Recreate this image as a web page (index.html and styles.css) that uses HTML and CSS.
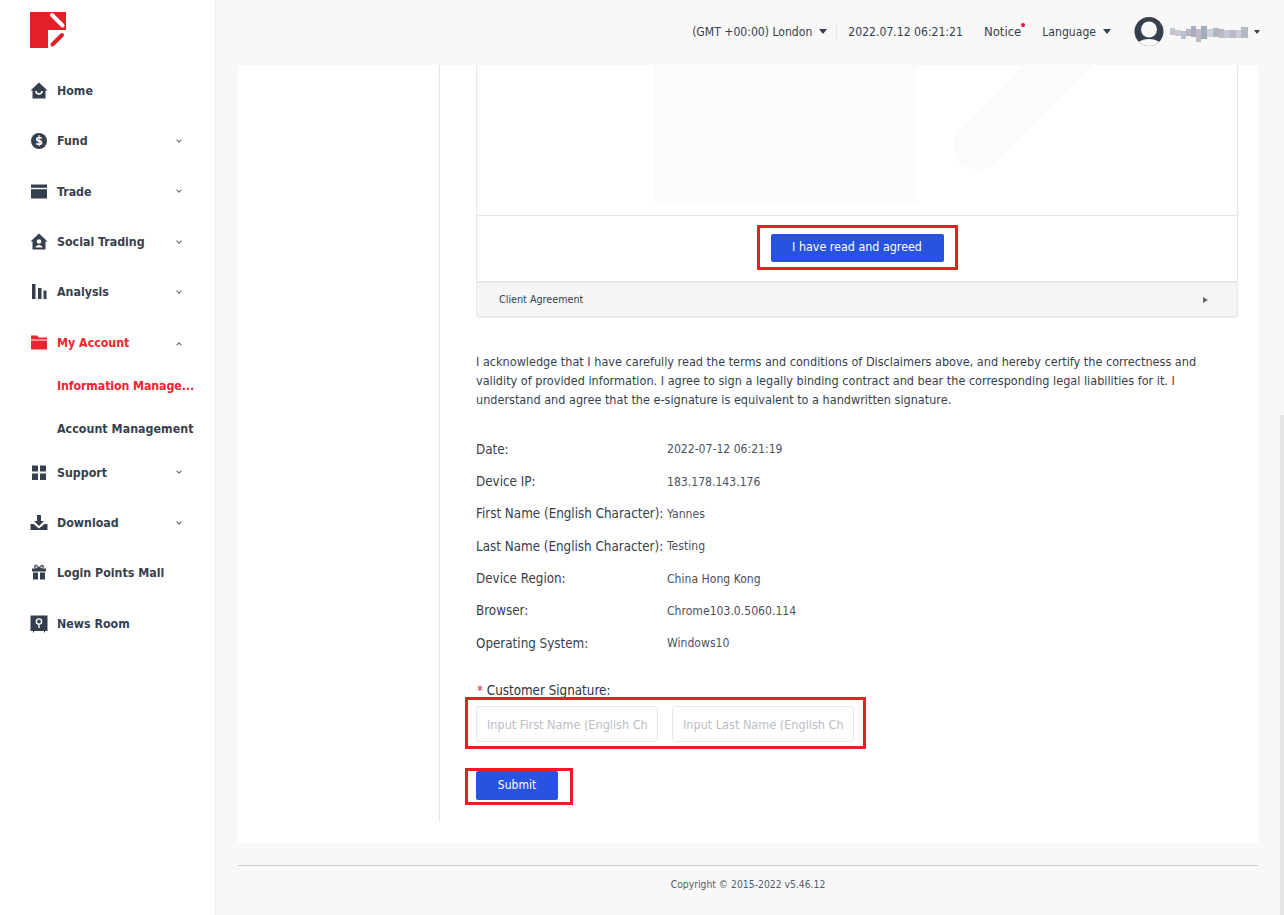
FILE: index.html
```html
<!DOCTYPE html>
<html lang="en">
<head>
<meta charset="utf-8">
<title>Information Management</title>
<link rel="stylesheet" href="styles.css">
</head>
<body>
<div class="app">
  <aside class="sidebar">
    <div class="logo">
      <svg width="36" height="36" viewBox="0 0 36 36"><path d="M0 0H36V18H18V36H0Z" fill="#e1202a"/><path d="M22 3L32.5 13.5" stroke="#fff" stroke-width="4" stroke-linecap="round" fill="none"/><path d="M22.5 32.5L32 23" stroke="#e1202a" stroke-width="4" stroke-linecap="round" fill="none"/></svg>
    </div>
    <nav class="menu">
      <a class="item"><svg class="ico" viewBox="0 0 18 18"><path d="M9 0.5L17.5 8.5H15.5V16.5H2.5V8.5H0.5Z" fill="#363f4d"/><path d="M6 9a3 3 0 0 0 6 0" stroke="#fff" stroke-width="1.6" fill="none"/></svg><span class="label">Home</span></a>
      <a class="item"><svg class="ico" viewBox="0 0 18 18"><circle cx="9" cy="9" r="8" fill="#363f4d"/><text x="9" y="13" text-anchor="middle" class="dollar">$</text></svg><span class="label">Fund</span><i class="chev"></i></a>
      <a class="item"><svg class="ico" viewBox="0 0 18 18"><path d="M1 1.5H17V15.5H1Z" fill="#363f4d"/><path d="M1 5.5H17" stroke="#fff" stroke-width="1.4"/></svg><span class="label">Trade</span><i class="chev"></i></a>
      <a class="item"><svg class="ico" viewBox="0 0 18 18"><path d="M9 0.5L17.5 8.5H15.5V16.5H2.5V8.5H0.5Z" fill="#363f4d"/><circle cx="9" cy="8.5" r="2.3" fill="#fff"/><path d="M5.5 14.5c0-3.4 7-3.4 7 0Z" fill="#fff"/></svg><span class="label">Social Trading</span><i class="chev"></i></a>
      <a class="item"><svg class="ico" viewBox="0 0 18 18"><path d="M2 1H5.5V16H2ZM8 5H11.500V16H8ZM13.500 7.500H16.500V16H13.500Z" fill="#363f4d"/></svg><span class="label">Analysis</span><i class="chev"></i></a>
      <a class="item active"><svg class="ico" viewBox="0 0 18 18"><path d="M1 1.500H7L9 3.500H17V15.500H1Z" fill="#f0242f"/><path d="M1 6H17" stroke="#fff" stroke-width="1"/></svg><span class="label">My Account</span><i class="chev up"></i></a>
      <div class="sub">
        <a class="sub-item active">Information Manage...</a>
        <a class="sub-item">Account Management</a>
      </div>
      <a class="item"><svg class="ico" viewBox="0 0 18 18"><path d="M2 1.500H8V7.500H2ZM10 1.500H16V7.500H10ZM2 9.500H8V16H2ZM10 9.500H16V16H10Z" fill="#363f4d"/></svg><span class="label">Support</span><i class="chev"></i></a>
      <a class="item"><svg class="ico" viewBox="0 0 18 18"><path d="M7 1H11V7H14L9 12L4 7H7Z" fill="#363f4d"/><path d="M0.500 10H3.500L9 14.500L14.500 10H17.500V16H0.500Z" fill="#363f4d"/></svg><span class="label">Download</span><i class="chev"></i></a>
      <a class="item gift"><svg class="ico" viewBox="0 0 18 18"><path d="M2 4.500H16V7.500H2ZM3 8.500H8V15.500H3ZM10 8.500H15V15.500H10Z" fill="#363f4d"/><path d="M9 4.500C7 0.500 4 0.500 5 4ZM9 4.500C11 0.500 14 0.500 13 4Z" stroke="#363f4d" stroke-width="1.200" fill="none"/></svg><span class="label">Login Points Mall</span></a>
      <a class="item"><svg class="ico" viewBox="0 0 18 18"><path d="M0.500 0.500H17.500V16H15V17.500H14V16H4V17.500H3V16H0.500Z" fill="#363f4d"/><circle cx="9" cy="6.500" r="2.600" fill="none" stroke="#fff" stroke-width="1.400"/><path d="M9 9V13" stroke="#fff" stroke-width="1.400"/></svg><span class="label">News Room</span></a>
    </nav>
  </aside>
  <div class="main">
    <header class="topbar">
      <span class="tz">(GMT +00:00) London<i class="caret"></i></span>
      <span class="clock">2022.07.12 06:21:21</span>
      <span class="notice">Notice<i class="dot"></i></span>
      <span class="lang">Language<i class="caret"></i></span>
      <span class="user">
        <svg class="avatar" viewBox="0 0 30 30"><defs><clipPath id="av"><circle cx="15" cy="14.500" r="14.500"/></clipPath></defs><circle cx="15" cy="14.500" r="14.500" fill="#363f4d"/><g clip-path="url(#av)"><circle cx="15" cy="12.500" r="8" fill="#f8f8f8"/><ellipse cx="15" cy="30" rx="13" ry="8" fill="#f8f8f8"/></g></svg>
        <svg class="mosaic" width="81" height="18" viewBox="0 0 81 18"><rect x="0" y="4" width="5" height="7" fill="#c0c6d0"/><rect x="5" y="6" width="6" height="6" fill="#ccc8d0"/><rect x="11" y="7" width="5" height="8" fill="#b8c2d0"/><rect x="16" y="5" width="5" height="7" fill="#bcb4bc"/><rect x="21" y="2" width="5" height="11" fill="#a8aebc"/><rect x="26" y="5" width="5" height="13" fill="#c0b8c6"/><rect x="31" y="2" width="6" height="13" fill="#a2aebe"/><rect x="37" y="5" width="6" height="8" fill="#ccd0d8"/><rect x="43" y="4" width="6" height="9" fill="#b2b6c0"/><rect x="49" y="5" width="5" height="9" fill="#bcb8c2"/><rect x="54" y="6" width="6" height="8" fill="#c4c8d2"/><rect x="60" y="6" width="6" height="8" fill="#bcbac6"/><rect x="66" y="6" width="5" height="8" fill="#ccccd6"/><rect x="71" y="3" width="7" height="11" fill="#b4b8c2"/></svg><i class="caret small"></i>
      </span>
    </header>
    <main class="content">
      <section class="panel">
        <div class="rail">
          <div class="card">
            <div class="doc">
              <div class="wm-page"></div>
              <svg class="wm-stroke" width="760" height="150" viewBox="0 0 760 150"><path d="M501 80L640 -59" stroke="#fbfbfb" stroke-width="50" stroke-linecap="round" fill="none"/></svg>
            </div>
            <div class="agree"><button class="btn btn-wide">I have read and agreed</button><span class="mark mark-agree"></span></div>
            <div class="collapse"><span>Client Agreement</span><i class="tri"></i></div>
          </div>
          <p class="ack">I acknowledge that I have carefully read the terms and conditions of Disclaimers above, and hereby certify the correctness and validity of provided information. I agree to sign a legally binding contract and bear the corresponding legal liabilities for it. I understand and agree that the e-signature is equivalent to a handwritten signature.</p>
          <dl class="facts">
            <div class="fact"><dt>Date:</dt><dd>2022-07-12 06:21:19</dd></div>
            <div class="fact"><dt>Device IP:</dt><dd>183.178.143.176</dd></div>
            <div class="fact"><dt>First Name (English Character):</dt><dd>Yannes</dd></div>
            <div class="fact"><dt>Last Name (English Character):</dt><dd>Testing</dd></div>
            <div class="fact"><dt>Device Region:</dt><dd>China Hong Kong</dd></div>
            <div class="fact"><dt>Browser:</dt><dd>Chrome103.0.5060.114</dd></div>
            <div class="fact"><dt>Operating System:</dt><dd>Windows10</dd></div>
          </dl>
          <div class="sig-label"><span class="req">*</span> Customer Signature:</div>
          <div class="sig-row">
            <input class="field" placeholder="Input First Name (English Character)">
            <input class="field" placeholder="Input Last Name (English Character)">
            <span class="mark mark-sig"></span>
          </div>
          <div class="submit-row"><button class="btn btn-submit">Submit</button><span class="mark mark-submit"></span></div>
        </div>
      </section>
      <footer class="footer">Copyright © 2015-2022 v5.46.12</footer>
    </main>
  </div>
</div>
<div class="thumb"></div>
</body>
</html>
```
FILE: styles.css
```css
* { box-sizing: border-box; }
html, body { margin: 0; height: 915px; overflow: hidden; }
body { font-family: "DejaVu Sans", "Liberation Sans", sans-serif; font-stretch: condensed; font-size: 12px; color: #363f4d; background: #f8f8f8; }
.app { display: flex; height: 915px; }

.sidebar { width: 216px; flex: none; background: #fff; border-right: 1px solid #eeeeee; }
.logo { height: 65px; padding: 12px 0 0 30px; }
.logo svg { display: block; }
.menu { display: flex; flex-direction: column; padding-top: 0.6px; }
.item { height: 50.4px; display: flex; align-items: center; padding-left: 30px; font-size: 12.3px; font-weight: 700; position: relative; }
.ico { width: 18px; height: 18px; margin-right: 9px; flex: none; }
.dollar { font-size: 12px; font-weight: 700; fill: #fff; }
.label { white-space: nowrap; }
.item.active, .sub-item.active { color: #f0242f; }
.chev { position: absolute; left: 176.5px; top: 22px; width: 4px; height: 4px; border-right: 1px solid #666; border-bottom: 1px solid #666; transform: rotate(45deg); }
.chev.up { transform: rotate(225deg); top: 25px; }
.sub { display: flex; flex-direction: column; gap: 7px; margin-bottom: 0.4px; }
.sub-item { height: 36px; line-height: 36px; padding-left: 57px; font-size: 12.3px; font-weight: 700; white-space: nowrap; letter-spacing: 0.05px; }
.sub-item.active { letter-spacing: -0.1px; }

.main { flex: 1; min-width: 0; display: flex; flex-direction: column; }
.topbar { height: 65px; flex: none; display: flex; align-items: center; padding: 0 24px 2px 0; justify-content: flex-end; background: #f8f8f8; font-size: 12.1px; }
.tz { display: flex; align-items: center; padding-right: 9px; border-right: 1px solid #e6e6e6; height: 18px; }
.caret { display: inline-block; width: 0; height: 0; border: 4px solid transparent; border-top: 5px solid #363f4d; border-bottom: 0; margin-left: 7px; }
.caret.small { border-width: 3.5px; border-top-width: 4px; border-bottom: 0; margin-left: 3px; }
.clock { margin-left: 11px; }
.notice { margin-left: 21px; position: relative; font-size: 13px; }
.dot { position: absolute; right: -4px; top: -1px; width: 4px; height: 4px; border-radius: 50%; background: #f0142f; }
.lang { margin-left: 21px; display: flex; align-items: center; }
.user { margin-left: 23px; display: flex; align-items: center; }
.avatar { width: 30px; height: 30px; margin-right: 6px; }
.mosaic { display: block; filter: blur(.7px); margin-top: 3px; }

.content { flex: 1; min-height: 0; padding: 0 26px 0 22px; display: flex; flex-direction: column; }
.panel { background: #fff; height: 778px; flex: none; padding-left: 201px; }
.rail { height: 757px; border-left: 1px solid #e4e4e4; padding-left: 36px; }

.card { width: 762px; border: 1px solid #e8e8e8; border-top: 0; border-radius: 0 0 4px 4px; }
.doc { height: 151px; border-bottom: 1px solid #e6e6e6; position: relative; overflow: hidden; }
.wm-page { position: absolute; left: 177px; top: 0; width: 262px; height: 138px; background: #fbfbfb; }
.wm-stroke { position: absolute; left: 0; top: 0; }
.agree { height: 65px; padding-bottom: 2px; display: flex; align-items: center; justify-content: center; position: relative; }
.btn { background: #2753e0; color: #fff; border: 0; border-radius: 2px; font: inherit; font-stretch: condensed; padding: 0 0 2px; }
.btn-wide { width: 173px; height: 28px; font-size: 12.4px; }
.collapse { height: 36px; background: #f5f5f5; border-top: 2px solid #e8e8e8; border-bottom: 1px solid #e8e8e8; border-radius: 0 0 4px 4px; display: flex; align-items: center; justify-content: space-between; padding: 0 29px 0 22px; font-size: 10.7px; }
.tri { width: 0; height: 0; border: 3.5px solid transparent; border-left: 5px solid #666; border-right: 0; }

.ack { margin: 34px 0 0; width: 730px; line-height: 19px; font-size: 12.55px; }
.facts { margin: 24px 0 0; }
.fact { height: 32.35px; display: flex; align-items: center; margin: 0; }
dt { width: 191px; flex: none; white-space: nowrap; font-size: 13.3px; }
dd { margin: 0; font-size: 12.1px; color: #4a5260; }
.sig-label { margin-top: 24px; font-size: 13.3px; line-height: 16px; color: #2c3440; }
.req { color: #c8323a; margin-left: 1px; }
.sig-row { display: flex; gap: 14px; margin-top: 7px; position: relative; }
.field { width: 182px; height: 36px; border: 1px solid #e8e8e8; border-radius: 3px; padding: 0 10px; font: inherit; font-size: 12.55px; font-stretch: condensed; outline: 0; background: #fff; }
.field::placeholder { color: #bbbec4; opacity: 1; }
.submit-row { margin-top: 29px; position: relative; width: 82px; }
.btn-submit { width: 82px; height: 29px; display: block; }
.mark { position: absolute; border: 3px solid #ec1c24; pointer-events: none; }
.mark-agree { left: 280px; top: 9px; width: 201px; height: 45px; }
.mark-sig { left: -11px; top: -9px; width: 401px; height: 52px; }
.mark-submit { left: -11px; top: -3px; width: 108px; height: 37px; }

.footer { margin-top: 22px; border-top: 1px solid #c8c8c8; padding-top: 12px; text-align: center; font-size: 10.3px; color: #555c68; }
.thumb { position: fixed; right: 0; top: 415px; width: 4px; height: 500px; background: #e6e6e6; }
```
